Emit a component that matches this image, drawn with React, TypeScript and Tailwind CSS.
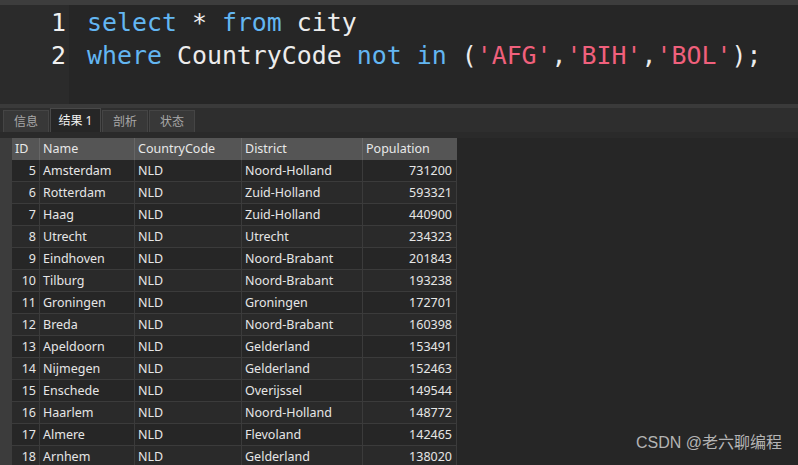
import React from "react";

const rows: [number, string, string, string, number][] = [
  [5, "Amsterdam", "NLD", "Noord-Holland", 731200],
  [6, "Rotterdam", "NLD", "Zuid-Holland", 593321],
  [7, "Haag", "NLD", "Zuid-Holland", 440900],
  [8, "Utrecht", "NLD", "Utrecht", 234323],
  [9, "Eindhoven", "NLD", "Noord-Brabant", 201843],
  [10, "Tilburg", "NLD", "Noord-Brabant", 193238],
  [11, "Groningen", "NLD", "Groningen", 172701],
  [12, "Breda", "NLD", "Noord-Brabant", 160398],
  [13, "Apeldoorn", "NLD", "Gelderland", 153491],
  [14, "Nijmegen", "NLD", "Gelderland", 152463],
  [15, "Enschede", "NLD", "Overijssel", 149544],
  [16, "Haarlem", "NLD", "Noord-Holland", 148772],
  [17, "Almere", "NLD", "Flevoland", 142465],
  [18, "Arnhem", "NLD", "Gelderland", 138020],
];

const tabs = ["信息", "结果 1", "剖析", "状态"];

export default function App() {
  return (
    <div className="relative flex h-[465px] w-[798px] flex-col overflow-hidden bg-[#262626] font-['Noto_Sans','Noto_Sans_CJK_SC',sans-serif]">
      <div className="h-[5px] shrink-0 bg-[#3d3d3d]" />

      {/* editor */}
      <div className="flex h-[99px] shrink-0 font-['DejaVu_Sans_Mono',monospace] text-[24.9px] leading-[33px]">
        <div className="flex w-[69px] flex-col items-end bg-[#2b2b2b] pr-[3px] pt-[1px] text-[#f0f0f0]">
          <div>1</div>
          <div>2</div>
        </div>
        <div className="flex-1 bg-[#262626] pl-[18px] pt-[1px] text-[#ececec] whitespace-pre">
          <div>
            <span className="text-[#63b6f2]">select</span> * <span className="text-[#63b6f2]">from</span> city
          </div>
          <div>
            <span className="text-[#63b6f2]">where</span> CountryCode <span className="text-[#63b6f2]">not in</span> (
            <span className="text-[#f0607c]">'AFG'</span>,<span className="text-[#f0607c]">'BIH'</span>,
            <span className="text-[#f0607c]">'BOL'</span>);
          </div>
        </div>
      </div>

      <div className="h-[4px] shrink-0 bg-[#3a3a3a]" />

      {/* tabs */}
      <div className="flex h-[24px] shrink-0 items-end gap-[1px] bg-[#2e2e2e] pl-[3px] text-[12px]">
        {tabs.map((t, i) =>
          i === 1 ? (
            <div
              key={t}
              className="flex h-[24px] w-[51px] items-center justify-center border-x border-t border-[#484848] bg-[#262626] text-[#f2f2f2]"
            >
              {t}
            </div>
          ) : (
            <div
              key={t}
              className="flex h-[22px] w-[46px] items-center justify-center border-x border-t border-[#454545] bg-[#383838] text-[#a8a8a8]"
            >
              {t}
            </div>
          )
        )}
      </div>
      <div className="h-[6px] shrink-0 bg-[#2a2a2a]" />

      {/* grid */}
      <div className="flex text-[12.5px] text-[#e6e6e6]">
        <div className="w-[12px] shrink-0 bg-[#3c3c3c]" />
        <div className="w-[445px] shrink-0">
          <div className="grid h-[22px] grid-cols-[28px_95px_107px_121px_94px] bg-[#555555] text-[#e8e8e8]">
            <div className="border-r border-[#666] pl-[3px] leading-[21px]">ID</div>
            <div className="border-r border-[#666] pl-[3px] leading-[21px]">Name</div>
            <div className="border-r border-[#666] pl-[3px] leading-[21px]">CountryCode</div>
            <div className="border-r border-[#666] pl-[3px] leading-[21px]">District</div>
            <div className="pl-[3px] leading-[21px]">Population</div>
          </div>
          {rows.map((r, i) => (
            <div
              key={r[0]}
              className={
                "grid h-[22px] grid-cols-[28px_95px_107px_121px_94px] border-b border-[#3b3b3b] " +
                (i % 2 === 0 ? "bg-[#262626]" : "bg-[#2a2a2a]")
              }
            >
              <div className="border-r border-[#3b3b3b] pr-[3px] text-right leading-[21px]">{r[0]}</div>
              <div className="border-r border-[#3b3b3b] pl-[3px] leading-[21px]">{r[1]}</div>
              <div className="border-r border-[#3b3b3b] pl-[3px] leading-[21px]">{r[2]}</div>
              <div className="border-r border-[#3b3b3b] pl-[3px] leading-[21px]">{r[3]}</div>
              <div className="border-r border-[#3b3b3b] pr-[4px] text-right leading-[21px]">{r[4]}</div>
            </div>
          ))}
        </div>
      </div>

      <div className="absolute bottom-[10px] right-[16px] text-[16px] text-[#b4b4b4] font-['Liberation_Sans','Noto_Sans_CJK_SC',sans-serif]">
        CSDN @老六聊编程
      </div>
    </div>
  );
}
